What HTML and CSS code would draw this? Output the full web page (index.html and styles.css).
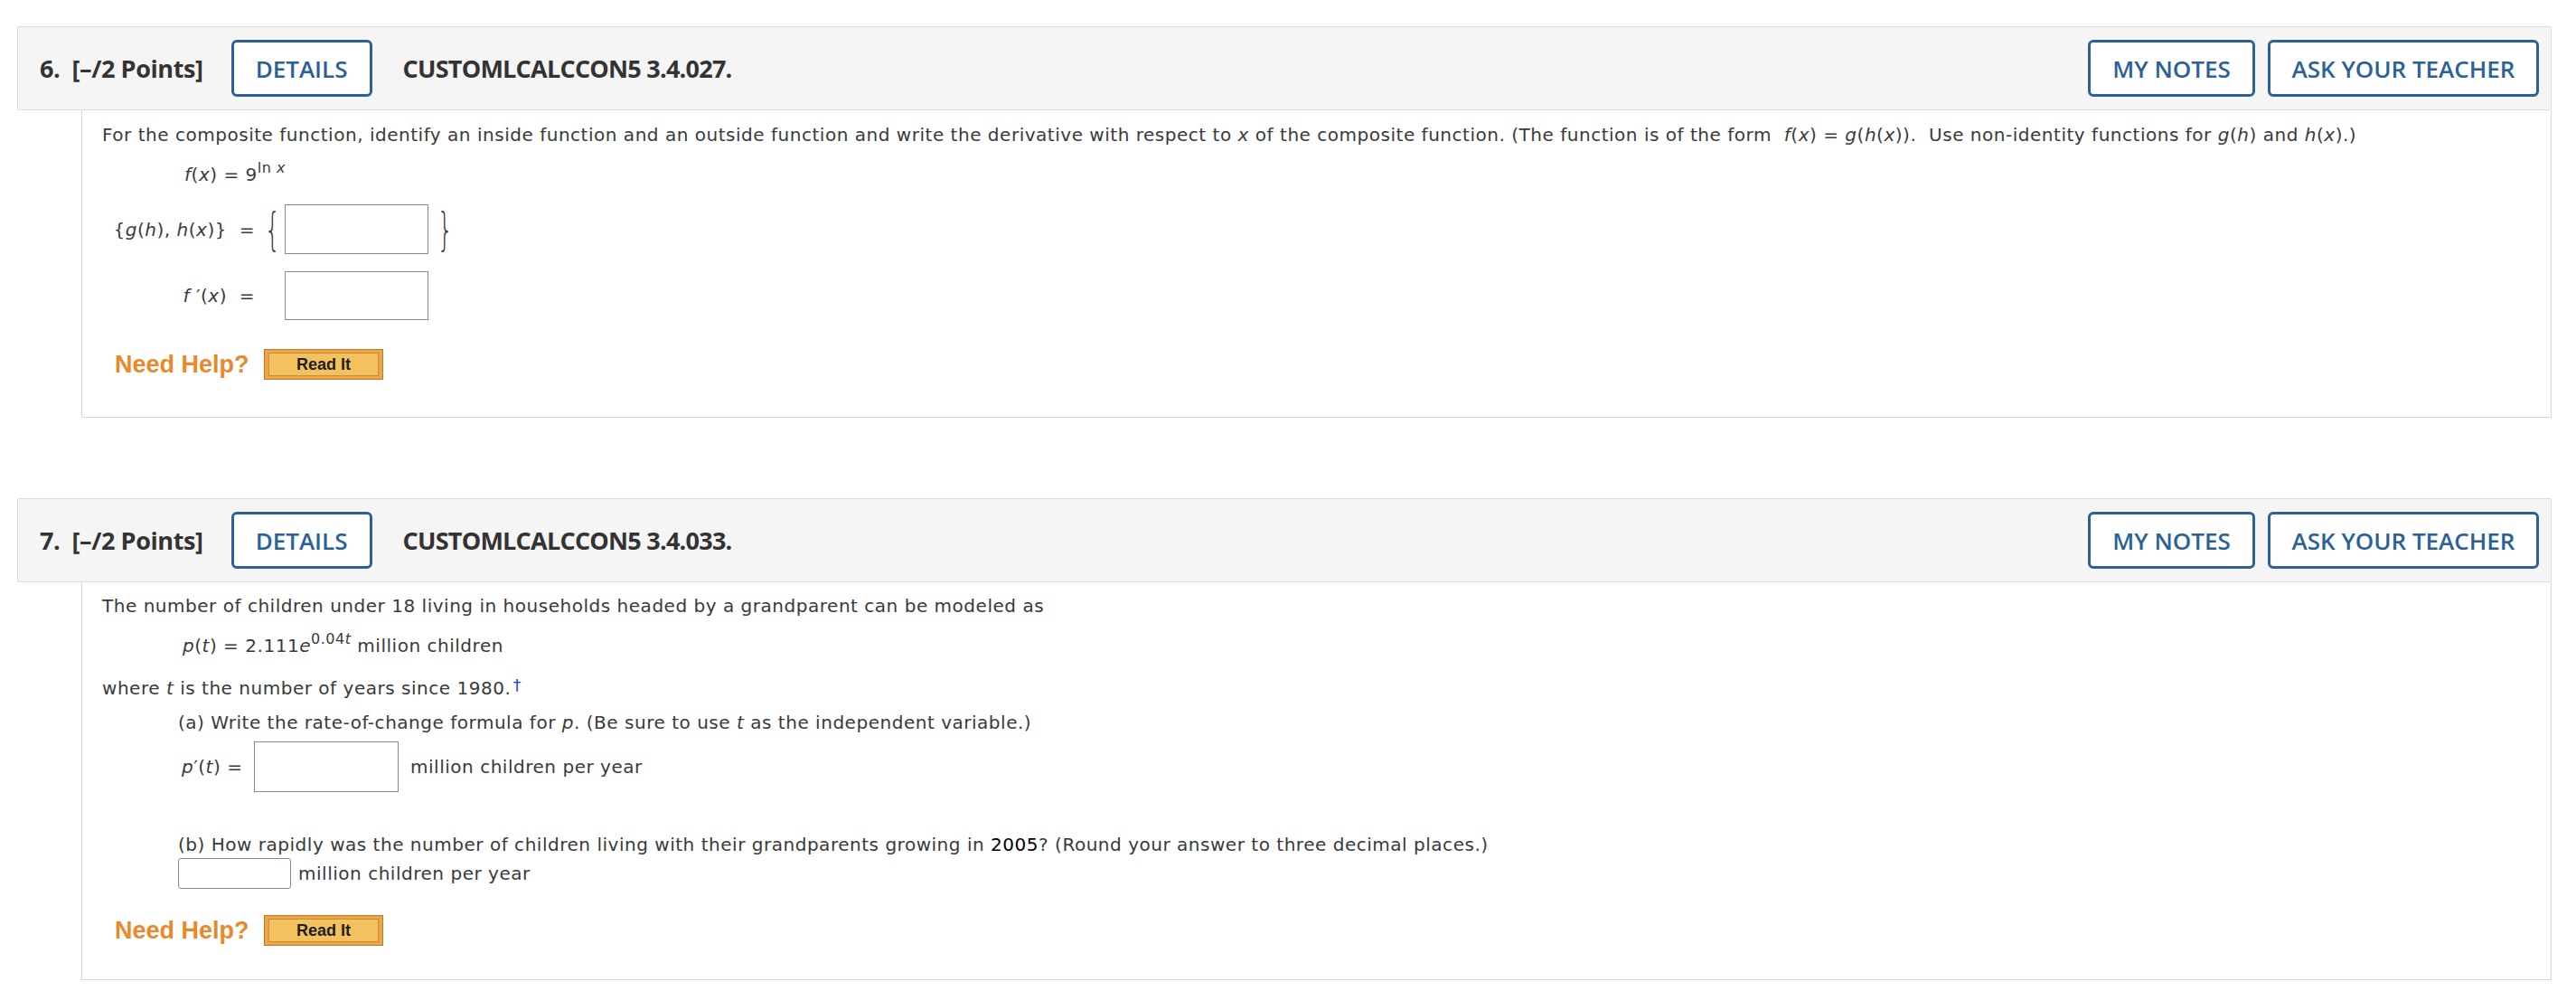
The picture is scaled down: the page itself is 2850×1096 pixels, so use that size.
FILE: index.html
```html
<!DOCTYPE html>
<html>
<head>
<meta charset="utf-8">
<link rel="stylesheet" href="styles.css">
</head>
<body>
<div class="page">
  <section class="card card-first">
    <div class="head">
      <span class="qnum">6.&nbsp; [–/2 Points]</span>
      <button class="btn btn-details">DETAILS</button>
      <span class="qcode">CUSTOMLCALCCON5 3.4.027.</span>
      <span class="spacer"></span>
      <button class="btn btn-notes">MY NOTES</button>
      <button class="btn btn-ask">ASK YOUR TEACHER</button>
    </div>
    <div class="body body-one">
      <div class="line">For the composite function, identify an inside function and an outside function and write the derivative with respect to <i>x</i> of the composite function. (The function is of the form&nbsp; <i>f</i>(<i>x</i>) = <i>g</i>(<i>h</i>(<i>x</i>)).&nbsp; Use non-identity functions for <i>g</i>(<i>h</i>) and <i>h</i>(<i>x</i>).)</div>
      <div class="line formula-f"><i>f</i>(<i>x</i>) = 9<sup class="sup">ln <i>x</i></sup></div>
      <div class="answers">
        <span class="lbl">{<i>g</i>(<i>h</i>), <i>h</i>(<i>x</i>)} &nbsp;=</span>
        <span class="brace brace-l">{</span>
        <span class="box"></span>
        <span class="brace brace-r">}</span>
        <span class="lbl lbl-2"><i>f</i> ′(<i>x</i>) &nbsp;=</span>
        <span class="box box-2"></span>
      </div>
      <div class="help">
        <span class="need">Need Help?</span>
        <span class="readit"><span class="readit-in">Read It</span></span>
      </div>
    </div>
  </section>

  <section class="card card-second">
    <div class="head">
      <span class="qnum">7.&nbsp; [–/2 Points]</span>
      <button class="btn btn-details">DETAILS</button>
      <span class="qcode">CUSTOMLCALCCON5 3.4.033.</span>
      <span class="spacer"></span>
      <button class="btn btn-notes">MY NOTES</button>
      <button class="btn btn-ask">ASK YOUR TEACHER</button>
    </div>
    <div class="body body-two">
      <div class="line">The number of children under 18 living in households headed by a grandparent can be modeled as</div>
      <div class="line formula-p"><i>p</i>(<i>t</i>) = 2.111<i>e</i><sup class="sup">0.04<i>t</i></sup> million children</div>
      <div class="line where">where <i>t</i> is the number of years since 1980.<span class="dagger">†</span></div>
      <div class="line part-a">(a) Write the rate-of-change formula for <i>p</i>. (Be sure to use <i>t</i> as the independent variable.)</div>
      <div class="row-pp">
        <span class="lbl-pp"><i>p</i>′(<i>t</i>) =</span>
        <span class="box box-pp"></span>
        <span class="unit">million children per year</span>
      </div>
      <div class="line part-b">(b) How rapidly was the number of children living with their grandparents growing in <span class="dark">2005</span>? (Round your answer to three decimal places.)</div>
      <div class="row-small">
        <span class="box-small"></span>
        <span class="unit unit-small">million children per year</span>
      </div>
      <div class="help help-two">
        <span class="need">Need Help?</span>
        <span class="readit"><span class="readit-in">Read It</span></span>
      </div>
    </div>
  </section>
</div>
</body>
</html>
```

FILE: styles.css
```css
html, body {
  margin: 0;
  padding: 0;
  background: #ffffff;
}

.page {
  padding: 29px 0 0 19px;
  width: 2804px;
}

.card-second {
  margin-top: 89px;
}

.head {
  height: 91px;
  border: 1px solid #dcdcdc;
  border-radius: 2px;
  background: #f5f5f5;
  display: flex;
  align-items: center;
  padding: 0 13px 0 24px;
  font-family: "Open Sans", "Liberation Sans", sans-serif;
  color: #333333;
}

.qnum {
  font-size: 27px;
  font-weight: 700;
  letter-spacing: -0.4px;
}

.qcode {
  font-size: 27px;
  font-weight: 700;
  margin-left: 34px;
  letter-spacing: -0.75px;
}

.spacer {
  flex: 1;
}

.btn {
  height: 63px;
  box-sizing: border-box;
  border: 3px solid #2b6197;
  border-radius: 6px;
  background: #ffffff;
  color: #2b6197;
  font-family: "Open Sans", "Liberation Sans", sans-serif;
  font-size: 26px;
  font-weight: 600;
  padding: 0;
  display: flex;
  align-items: center;
  justify-content: center;
}

.btn-details {
  width: 156px;
  margin-left: 31px;
}

.btn-notes {
  width: 185px;
}

.btn-ask {
  width: 300px;
  margin-left: 14px;
}

.body {
  margin-left: 71px;
  border: 1px solid #d6d6d6;
  border-top: none;
  font-family: "DejaVu Sans", Verdana, sans-serif;
  font-size: 20px;
  letter-spacing: 0.52px;
  color: #3a3a3a;
  padding-left: 22px;
}

.body-one {
  padding-top: 13px;
  padding-bottom: 41px;
}

.body-two {
  padding-top: 12px;
  padding-bottom: 37px;
}

.line {
  height: 28px;
  line-height: 28px;
  white-space: nowrap;
}

.sup {
  font-size: 16px;
  vertical-align: 9px;
  line-height: 0;
}

.formula-f {
  margin-top: 16px;
  padding-left: 91px;
}

.answers {
  margin-top: 19px;
  display: grid;
  grid-template-columns: 169px 33px 159px 35px;
  grid-template-rows: 55px 54px;
  row-gap: 19px;
  align-items: center;
}

.lbl {
  text-align: right;
  white-space: nowrap;
}

.lbl-2 {
  grid-column: 1;
}

.brace {
  font-size: 50px;
  font-weight: 200;
  line-height: 50px;
  color: #3a3a3a;
  font-family: "DejaVu Sans", sans-serif;
  transform: scaleX(0.55);
  letter-spacing: 0;
}

.brace-l {
  text-align: center;
  padding-left: 6px;
}

.brace-r {
  text-align: right;
}

.box {
  height: 55px;
  box-sizing: border-box;
  border: 1.5px solid #8a8a8a;
  background: #ffffff;
}

.box-2 {
  grid-column: 3;
  height: 54px;
}

.help {
  margin-top: 32px;
  display: flex;
  align-items: center;
  padding-left: 14px;
  height: 34px;
  letter-spacing: 0;
}

.need {
  font-family: "Liberation Sans", Arial, sans-serif;
  font-weight: 700;
  font-size: 27px;
  color: #e8892b;
  width: 165px;
}

.readit {
  width: 132px;
  height: 34px;
  box-sizing: border-box;
  border: 1px solid #c2782a;
  background: #eda54a;
  padding: 3px 4px;
  display: flex;
}

.readit-in {
  flex: 1;
  border: 1px solid #c58e3e;
  background: #f3c15e;
  font-family: "Liberation Sans", Arial, sans-serif;
  font-weight: 700;
  font-size: 18px;
  color: #1e1e1e;
  display: flex;
  align-items: center;
  justify-content: center;
}

.formula-p {
  margin-top: 16px;
  padding-left: 89px;
}

.where {
  margin-top: 16px;
}

.dagger {
  color: #1a3cff;
  font-size: 18px;
  vertical-align: 4px;
  margin-left: 2px;
}

.part-a {
  margin-top: 13px;
  padding-left: 84px;
}

.row-pp {
  margin-top: 7px;
  display: flex;
  align-items: center;
  padding-left: 88px;
  height: 56px;
}

.lbl-pp {
  width: 80px;
  white-space: nowrap;
}

.box-pp {
  width: 160px;
  height: 56px;
}

.unit {
  margin-left: 13px;
}

.part-b {
  margin-top: 44px;
  padding-left: 84px;
}

.dark {
  color: #000000;
}

.row-small {
  margin-top: 1px;
  display: flex;
  align-items: center;
  padding-left: 84px;
  height: 34px;
}

.box-small {
  width: 125px;
  height: 34px;
  box-sizing: border-box;
  border: 1.5px solid #8a8a8a;
  border-radius: 3px;
}

.unit-small {
  margin-left: 8px;
}

.help-two {
  margin-top: 29px;
}
```
